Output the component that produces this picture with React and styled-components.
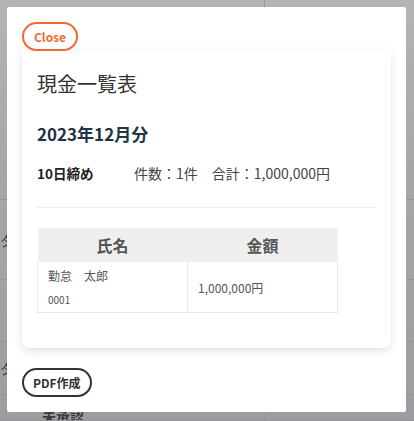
import * as React from "react";
import styled, { createGlobalStyle } from "styled-components";

const GlobalStyle = createGlobalStyle`
  html, body {
    margin: 0;
    padding: 0;
  }
  body {
    font-family: "Noto Sans CJK JP", "Noto Sans", sans-serif;
    color: #333;
  }
`;

const Page = styled.div`
  position: relative;
  width: 414px;
  height: 421px;
  overflow: hidden;
  background: linear-gradient(180deg, #b4b4b5 0%, #a7a7aa 40%, #9d9da1 100%);
`;

const Backdrop = styled.div`
  display: grid;
  grid-template-columns: 30px 235px 1fr;
  grid-template-rows: 200px 80px 62px 53px 1fr;
  height: 100%;
  color: #3b3b3e;
  font-size: 14px;
`;

const BackCell = styled.div`
  border-bottom: 1px solid #96969a;
  border-right: ${(p) => (p.$edge ? "1px solid #96969a" : "none")};
  display: flex;
  align-items: ${(p) => p.$align || "center"};
  padding-left: ${(p) => p.$pad || 0}px;
  padding-top: ${(p) => p.$top || 0}px;
  font-weight: ${(p) => (p.$bold ? 700 : 400)};
  overflow: hidden;
  white-space: nowrap;
`;

const Modal = styled.div`
  position: absolute;
  left: 7px;
  top: 7px;
  width: 399px;
  height: 405px;
  background: #fff;
  border-radius: 2px;
  box-sizing: border-box;
  padding: 15px;
  display: flex;
  flex-direction: column;
  align-items: flex-start;
`;

const PillButton = styled.button`
  height: 29px;
  padding: 0 ${(p) => p.$px || 10}px;
  border-radius: 15px;
  border: 2px solid ${(p) => p.$color};
  color: ${(p) => p.$color};
  background: #fff;
  font-family: inherit;
  font-size: 12px;
  font-weight: 700;
  line-height: 1;
  box-sizing: border-box;
  position: relative;
  z-index: 1;
`;

const Card = styled.div`
  align-self: stretch;
  background: #fff;
  border-radius: 0 0 8px 8px;
  box-shadow: 0 3px 10px rgba(0, 0, 0, 0.12);
  padding: 15px 15px 35px;
  margin-bottom: 20px;
`;

const Title = styled.h1`
  margin: 0;
  font-size: 20px;
  line-height: 36px;
  font-weight: 400;
  color: #333;
`;

const Month = styled.h2`
  margin: 20px 0 0;
  font-size: 17px;
  line-height: 24px;
  font-weight: 700;
  color: #223348;
`;

const InfoRow = styled.div`
  display: flex;
  align-items: center;
  margin-top: 17px;
  font-size: 14px;
  line-height: 20px;
`;

const Cutoff = styled.span`
  width: 97px;
  font-size: 13.5px;
  font-weight: 700;
  color: #222;
`;

const Summary = styled.span`
  color: #444;
  white-space: pre;
`;

const Divider = styled.hr`
  margin: 24px 0 20px;
  border: none;
  border-top: 1px solid #ecebe4;
`;

const Table = styled.table`
  width: 301px;
  border-collapse: collapse;
  table-layout: fixed;
`;

const HeadCell = styled.th`
  height: 34px;
  padding: 0;
  background: #efefef;
  color: #555;
  font-size: 16px;
  font-weight: 700;
  text-align: center;
`;

const Cell = styled.td`
  height: 50px;
  padding: 0 10px;
  border: 1px solid #e8e8f0;
  border-top: none;
  vertical-align: middle;
  font-size: 12px;
  color: #555;
`;

const Name = styled.div`
  line-height: 16px;
`;

const Code = styled.div`
  margin-top: 9px;
  font-size: 10px;
  line-height: 14px;
  color: #555;
`;

export default function App() {
  return (
    <>
      <GlobalStyle />
      <Page>
        <Backdrop>
          <BackCell />
          <BackCell $edge />
          <BackCell />
          <BackCell>タ</BackCell>
          <BackCell $edge />
          <BackCell />
          <BackCell />
          <BackCell $edge />
          <BackCell />
          <BackCell>タ</BackCell>
          <BackCell $edge />
          <BackCell />
          <BackCell />
          <BackCell $edge $bold $pad={12} $top={11} $align="flex-start">
            未承認
          </BackCell>
          <BackCell />
        </Backdrop>
        <Modal>
          <PillButton $color="#ef6a35" $px={10}>
            Close
          </PillButton>
          <Card>
            <Title>現金一覧表</Title>
            <Month>2023年12月分</Month>
            <InfoRow>
              <Cutoff>10日締め</Cutoff>
              <Summary>件数：1件　合計：1,000,000円</Summary>
            </InfoRow>
            <Divider />
            <Table>
              <thead>
                <tr>
                  <HeadCell>氏名</HeadCell>
                  <HeadCell>金額</HeadCell>
                </tr>
              </thead>
              <tbody>
                <tr>
                  <Cell>
                    <Name>勤怠　太郎</Name>
                    <Code>0001</Code>
                  </Cell>
                  <Cell>1,000,000円</Cell>
                </tr>
              </tbody>
            </Table>
          </Card>
          <PillButton $color="#333" $px={9}>
            PDF作成
          </PillButton>
        </Modal>
      </Page>
    </>
  );
}
